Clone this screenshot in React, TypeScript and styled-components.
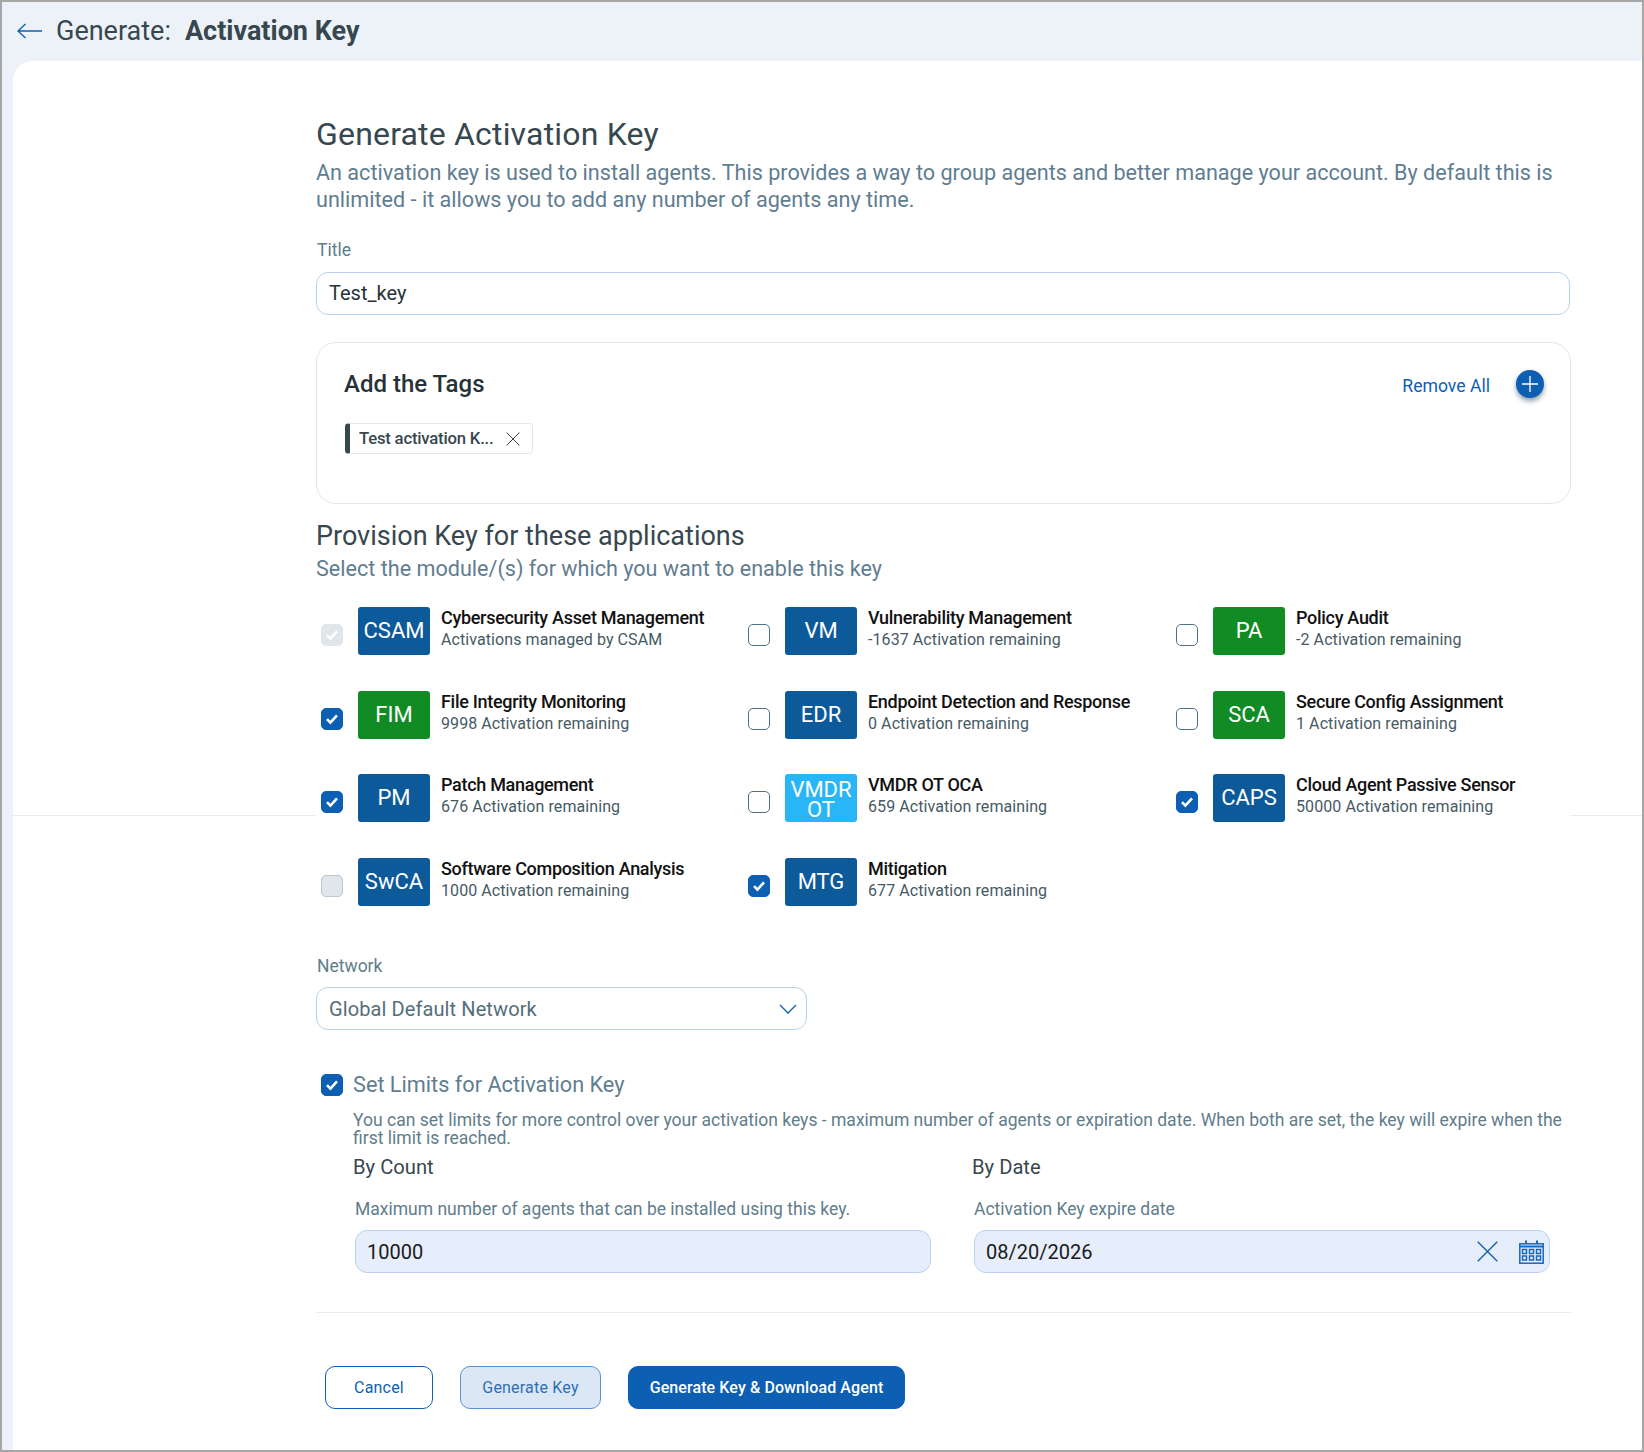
import React from 'react'
import styled, { createGlobalStyle } from 'styled-components'

const modules = [
  { code: 'CSAM', title: 'Cybersecurity Asset Management', sub: 'Activations managed by CSAM', color: '#0d5a9b', state: 'locked' },
  { code: 'VM', title: 'Vulnerability Management', sub: '-1637 Activation remaining', color: '#0d5a9b', state: 'off' },
  { code: 'PA', title: 'Policy Audit', sub: '-2 Activation remaining', color: '#118c25', state: 'off' },
  { code: 'FIM', title: 'File Integrity Monitoring', sub: '9998 Activation remaining', color: '#118c25', state: 'on' },
  { code: 'EDR', title: 'Endpoint Detection and Response', sub: '0 Activation remaining', color: '#0d5a9b', state: 'off' },
  { code: 'SCA', title: 'Secure Config Assignment', sub: '1 Activation remaining', color: '#118c25', state: 'off' },
  { code: 'PM', title: 'Patch Management', sub: '676 Activation remaining', color: '#0d5a9b', state: 'on' },
  { code: 'VMDR OT', title: 'VMDR OT OCA', sub: '659 Activation remaining', color: '#29b6f6', state: 'off' },
  { code: 'CAPS', title: 'Cloud Agent Passive Sensor', sub: '50000 Activation remaining', color: '#0d5a9b', state: 'on' },
  { code: 'SwCA', title: 'Software Composition Analysis', sub: '1000 Activation remaining', color: '#0d5a9b', state: 'grey' },
  { code: 'MTG', title: 'Mitigation', sub: '677 Activation remaining', color: '#0d5a9b', state: 'on' },
]

const App: React.FC = () => {
  return (
    <>
      <GlobalStyle />
      <Frame>
        <Header>
          <BackIcon width="26" height="16" viewBox="0 0 26 16">
            <path d="M25 8H1M8.5 1 1 8l7.5 7" fill="none" stroke="#0d5fb3" strokeWidth="1.3" />
          </BackIcon>
          <HeaderLabel>Generate:</HeaderLabel>
          <HeaderTitle>Activation Key</HeaderTitle>
        </Header>
        <Card>
          <Content>
            <PageTitle>Generate Activation Key</PageTitle>
            <Description>
              An activation key is used to install agents. This provides a way to group agents and better manage your
              account. By default this is unlimited - it allows you to add any number of agents any time.
            </Description>
            <TitleLabel>Title</TitleLabel>
            <Field>Test_key</Field>

            <TagsPanel>
              <TagsTop>
                <TagsTitle>Add the Tags</TagsTitle>
                <TagsActions>
                  <RemoveAll>Remove All</RemoveAll>
                  <AddButton>
                    <svg width="16" height="16" viewBox="0 0 16 16">
                      <path d="M8 0v16M0 8h16" stroke="#fff" strokeWidth="1.3" />
                    </svg>
                  </AddButton>
                </TagsActions>
              </TagsTop>
              <Tag>
                <TagText>Test activation K...</TagText>
                <CrossIcon size={14} color="#37474f" />
              </Tag>
            </TagsPanel>

            <SectionTitle>Provision Key for these applications</SectionTitle>
            <SectionSub>Select the module/(s) for which you want to enable this key</SectionSub>

            <ModuleGrid>
              {modules.map((m) => (
                <Module key={m.code}>
                  <CheckBox $state={m.state}>{(m.state === 'on' || m.state === 'locked') && <CheckMark />}</CheckBox>
                  <Badge $color={m.color} $small={m.code === 'VMDR OT'}>
                    {m.code}
                  </Badge>
                  <ModuleText>
                    <ModuleTitle>{m.title}</ModuleTitle>
                    <ModuleSub>{m.sub}</ModuleSub>
                  </ModuleText>
                </Module>
              ))}
            </ModuleGrid>

            <NetworkLabel>Network</NetworkLabel>
            <Select>
              Global Default Network
              <svg width="18" height="10" viewBox="0 0 18 10">
                <path d="M1 1l8 8 8-8" fill="none" stroke="#0d5fb3" strokeWidth="1.3" />
              </svg>
            </Select>

            <LimitsRow>
              <CheckBox $state="on">
                <CheckMark />
              </CheckBox>
              <LimitsTitle>Set Limits for Activation Key</LimitsTitle>
            </LimitsRow>
            <LimitsText>
              You can set limits for more control over your activation keys - maximum number of agents or expiration
              date. When both are set, the key will expire when the first limit is reached.
            </LimitsText>

            <LimitColumns>
              <LimitColumn>
                <LimitHeading>By Count</LimitHeading>
                <LimitLabel>Maximum number of agents that can be installed using this key.</LimitLabel>
                <FilledField>10000</FilledField>
              </LimitColumn>
              <LimitColumn>
                <LimitHeading>By Date</LimitHeading>
                <LimitLabel>Activation Key expire date</LimitLabel>
                <FilledField>
                  08/20/2026
                  <FieldIcons>
                    <CrossIcon size={21} color="#0d5fb3" />
                    <svg width="25" height="24" viewBox="0 0 25 24" fill="none" stroke="#1a66b8" strokeWidth="1.5">
                      <rect x="0.8" y="3.8" width="23.4" height="19.4" />
                      <path d="M0.8 6.4h23.4M7 0.5v3M18 0.5v3" strokeWidth="2" />
                      <path d="M3.5 9.5h4v4h-4zM10.5 9.5h4v4h-4zM17.5 9.5h4v4h-4zM3.5 16h4v4h-4zM10.5 16h4v4h-4zM17.5 16h4v4h-4z" />
                    </svg>
                  </FieldIcons>
                </FilledField>
              </LimitColumn>
            </LimitColumns>

            <Divider />
            <Buttons>
              <OutlineButton>Cancel</OutlineButton>
              <PaleButton>Generate Key</PaleButton>
              <SolidButton>Generate Key &amp; Download Agent</SolidButton>
            </Buttons>
          </Content>
        </Card>
      </Frame>
    </>
  )
}

const CheckMark: React.FC = () => (
  <svg width="14" height="12" viewBox="0 0 14 12">
    <path d="M2 6.2 5.4 9.6 12 2.4" fill="none" stroke="#fff" strokeWidth="2.6" />
  </svg>
)

const CrossIcon: React.FC<{ size: number; color: string }> = ({ size, color }) => (
  <svg width={size} height={size} viewBox="0 0 14 14">
    <path d="M.5.5l13 13M13.5.5l-13 13" fill="none" stroke={color} strokeWidth={size > 14 ? 0.9 : 1} />
  </svg>
)

const GlobalStyle = createGlobalStyle`
  html, body {
    margin: 0;
    padding: 0;
    background: #fff;
  }
  * {
    box-sizing: border-box;
  }
  body {
    font-family: Roboto, "Liberation Sans", sans-serif;
  }
`

const Frame = styled.div`
  width: 1644px;
  height: 1452px;
  border: 2px solid #a6a6a6;
  background: #edf2f9;
  overflow: hidden;
  display: flex;
  flex-direction: column;
`

const Header = styled.div`
  height: 59px;
  flex: none;
  display: flex;
  align-items: center;
  padding-left: 15px;
  padding-bottom: 1px;
`

const BackIcon = styled.svg`
  margin-right: 13px;
`

const HeaderLabel = styled.span`
  font-size: 27px;
  color: #37474f;
  margin-right: 14px;
`

const HeaderTitle = styled.span`
  font-size: 27px;
  font-weight: 700;
  color: #37474f;
`

const Card = styled.div`
  position: relative;
  flex: 1;
  margin-left: 11px;
  background: #fff;
  border-top-left-radius: 20px;
  padding-left: 303px;

  &::before {
    content: '';
    position: absolute;
    left: 0;
    right: 0;
    top: 754px;
    height: 1px;
    background: #e8eaed;
  }
`

const Content = styled.div`
  position: relative;
  width: 1255px;
  background: #fff;
  padding-top: 53px;
`

const PageTitle = styled.h1`
  margin: 0 0 5px;
  font-size: 32px;
  line-height: 40px;
  font-weight: 400;
  letter-spacing: 0.18px;
  color: #37474f;
`

const Description = styled.p`
  margin: 0;
  font-size: 21.6px;
  line-height: 27px;
  color: #5f7d91;
`

const TitleLabel = styled.div`
  margin: 25px 0 0 1px;
  font-size: 17.5px;
  line-height: 24px;
  color: #607d8b;
`

const Field = styled.div`
  margin-top: 10px;
  width: 1254px;
  height: 43px;
  border: 1px solid #b9d3ee;
  border-radius: 12px;
  display: flex;
  align-items: center;
  padding: 0 12px 2px;
  font-size: 20px;
  color: #263238;
`

const TagsPanel = styled.div`
  margin-top: 27px;
  height: 162px;
  border: 1px solid #e3e6ea;
  border-radius: 20px;
  padding: 26px 26px 0 27px;
`

const TagsTop = styled.div`
  display: flex;
  align-items: center;
  justify-content: space-between;
  height: 30px;
`

const TagsTitle = styled.h2`
  margin: 0;
  font-size: 24px;
  font-weight: 500;
  color: #263238;
`

const TagsActions = styled.div`
  display: flex;
  align-items: center;
  gap: 26px;
`

const RemoveAll = styled.span`
  padding-top: 3px;
  font-size: 17.6px;
  color: #0d5fb3;
`

const AddButton = styled.span`
  width: 28px;
  height: 28px;
  border-radius: 50%;
  background: #0d5fb3;
  box-shadow: 0 3px 5px rgba(38, 60, 80, 0.5);
  display: flex;
  align-items: center;
  justify-content: center;
`

const Tag = styled.div`
  margin: 24px 0 0 1px;
  width: 188px;
  height: 31px;
  border: 1px solid #e3e6ea;
  border-left: 5px solid #37474f;
  border-radius: 4px;
  display: flex;
  align-items: center;
  padding-left: 9px;
  gap: 13px;
`

const TagText = styled.span`
  font-size: 16.7px;
  font-weight: 500;
  color: #37474f;
  letter-spacing: -0.2px;
`

const SectionTitle = styled.h2`
  margin: 14px 0 0;
  font-size: 27px;
  line-height: 37px;
  font-weight: 400;
  color: #37474f;
`

const SectionSub = styled.p`
  margin: 0;
  font-size: 21.6px;
  line-height: 28px;
  color: #5f7d91;
`

const ModuleGrid = styled.div`
  margin-top: 24px;
  display: grid;
  grid-template-columns: 427px 428px 1fr;
  grid-auto-rows: 83.5px;
`

const Module = styled.div`
  display: flex;
  align-items: flex-start;
`

const CheckBox = styled.span<{ $state: string }>`
  flex: none;
  width: 22px;
  height: 22px;
  margin: 17px 15px 0 5px;
  border-radius: 5px;
  display: flex;
  align-items: center;
  justify-content: center;
  background: ${(props) =>
    props.$state === 'on' ? '#0d5fb3' : props.$state === 'off' ? '#fff' : '#e1e6ea'};
  border: 1.5px solid
    ${(props) =>
      props.$state === 'on'
        ? '#0d5fb3'
        : props.$state === 'off'
          ? '#4f7089'
          : props.$state === 'grey'
            ? '#b8c6d0'
            : '#e1e6ea'};
`

const Badge = styled.div<{ $color: string; $small: boolean }>`
  flex: none;
  width: 72px;
  height: 48px;
  border-radius: 3px;
  background: ${(props) => props.$color};
  color: #fff;
  display: flex;
  align-items: center;
  justify-content: center;
  text-align: center;
  font-size: 22px;
  padding-top: ${(props) => (props.$small ? '3px' : '0')};
  line-height: ${(props) => (props.$small ? '20px' : '28px')};
`

const ModuleText = styled.div`
  margin-left: 11px;
  white-space: nowrap;
`

const ModuleTitle = styled.div`
  font-size: 18px;
  line-height: 22px;
  font-weight: 500;
  color: #111;
  letter-spacing: -0.3px;
`

const ModuleSub = styled.div`
  font-size: 16px;
  line-height: 22px;
  letter-spacing: 0.08px;
  color: #455a64;
`

const NetworkLabel = styled.div`
  margin: 13px 0 0 1px;
  font-size: 17.5px;
  line-height: 24px;
  color: #607d8b;
`

const Select = styled.div`
  margin-top: 9px;
  width: 491px;
  height: 43px;
  border: 1px solid #b9d3ee;
  border-radius: 12px;
  display: flex;
  align-items: center;
  justify-content: space-between;
  padding: 0 9px 0 12px;
  font-size: 20px;
  letter-spacing: 0.1px;
  color: #546e7a;
`

const LimitsRow = styled.div`
  margin-top: 41px;
  display: flex;
  align-items: center;

  ${CheckBox} {
    margin-top: 0;
    margin-right: 10px;
  }
`

const LimitsTitle = styled.span`
  font-size: 21.7px;
  line-height: 28px;
  color: #5f7d91;
`

const LimitsText = styled.p`
  margin: 12px 0 0 37px;
  font-size: 17.55px;
  line-height: 18px;
  color: #607d8b;
`

const LimitColumns = styled.div`
  margin: 7px 0 0 37px;
  display: grid;
  grid-template-columns: 578px 578px;
  column-gap: 41px;
`

const LimitColumn = styled.div`
  min-width: 0;
`

const LimitHeading = styled.div`
  font-size: 20.2px;
  line-height: 26px;
  color: #37474f;
`

const LimitLabel = styled.div`
  margin: 17px 0 0 2px;
  font-size: 17.5px;
  line-height: 24px;
  color: #607d8b;
`

const FilledField = styled.div`
  margin: 9px 0 0 2px;
  height: 43px;
  border: 1px solid #b9d3ee;
  border-radius: 12px;
  background: #e6eefb;
  display: flex;
  align-items: center;
  justify-content: space-between;
  padding: 0 5px 0 11px;
  font-size: 20px;
  color: #1a1a1a;
`

const FieldIcons = styled.span`
  display: flex;
  align-items: center;
  gap: 21px;
`

const Divider = styled.div`
  margin-top: 39px;
  height: 1px;
  background: #e8eaed;
`

const Buttons = styled.div`
  margin: 53px 0 0 9px;
  display: flex;
  gap: 27px;
`

const BaseButton = styled.button`
  height: 43px;
  border-radius: 10px;
  font-family: inherit;
  font-size: 16px;
  font-weight: 400;
  letter-spacing: 0.2px;
  padding: 0;
`

const OutlineButton = styled(BaseButton)`
  width: 108px;
  background: #fff;
  border: 1px solid #0d5fb3;
  color: #0d5fb3;
`

const PaleButton = styled(BaseButton)`
  width: 141px;
  background: #dbe7f5;
  border: 1px solid #5a93d2;
  color: #2f6fb8;
`

const SolidButton = styled(BaseButton)`
  width: 277px;
  background: #0d5fb3;
  border: 1px solid #0d5fb3;
  color: #fff;
  font-weight: 500;
  letter-spacing: 0.1px;
`

export default App
